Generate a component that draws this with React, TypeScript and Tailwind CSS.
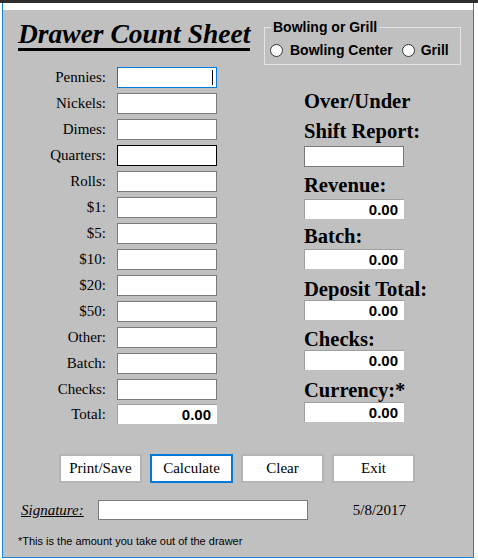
import React from "react";

const serif = "font-['Liberation_Serif',serif]";
const sans = "font-['Liberation_Sans',Arial,sans-serif]";

const rows = [
  "Pennies:",
  "Nickels:",
  "Dimes:",
  "Quarters:",
  "Rolls:",
  "$1:",
  "$5:",
  "$10:",
  "$20:",
  "$50:",
  "Other:",
  "Batch:",
  "Checks:",
];

function ValueBox({ className = "" }: { className?: string }) {
  return (
    <div
      className={`h-[20px] w-[100px] bg-white border-t border-l border-[#a0a0a0] flex items-center justify-end pr-[6px] ${sans} text-[15px] font-bold text-black leading-none ${className}`}
    >
      0.00
    </div>
  );
}

function Heading({ children, className = "" }: { children: React.ReactNode; className?: string }) {
  return (
    <div className={`${serif} font-bold text-[20.6px] leading-[20px] text-black whitespace-nowrap ${className}`}>
      {children}
    </div>
  );
}

function Radio({ className = "" }: { className?: string }) {
  return <span className={`block w-[13px] h-[13px] rounded-full bg-white border border-[#333] shrink-0 ${className}`} />;
}

export default function App() {
  return (
    <div className="w-[478px] h-[560px] bg-white overflow-hidden">
      <div className="h-[3px] bg-[#2d2d2d]" />
      <div className="ml-[2px] w-[472px] border-l border-r border-b border-[#1883d7]">
        <div className="h-[7px] bg-white" />
        <div className="h-[547px] bg-[#c0c0c0] flex flex-col">
          {/* header */}
          <div className="h-[57px] flex items-start">
            <div className="w-[261px] shrink-0">
              <span
                className={`ml-[15px] mt-[10px] inline-block ${serif} italic font-bold text-[27.5px] leading-[28px] text-black border-b-[3px] border-black whitespace-nowrap`}
              >
                Drawer Count Sheet
              </span>
            </div>
            <div className="mt-[17px] relative w-[197px] h-[38px] border border-[#e4e4e4] pt-[14px] pl-[5px]">
              <span
                className={`absolute -top-[9px] left-[6px] px-[2px] bg-[#c0c0c0] ${sans} font-bold text-[14px] leading-[16px] text-black whitespace-nowrap`}
              >
                Bowling or Grill
              </span>
              <div className={`flex items-center ${sans} font-bold text-[14px] leading-[16px] text-black whitespace-nowrap`}>
                <Radio />
                <span className="ml-[7px]">Bowling Center</span>
                <Radio className="ml-[9px]" />
                <span className="ml-[6px]">Grill</span>
              </div>
            </div>
          </div>

          {/* main */}
          <div className="flex">
            <div className="ml-[23px] flex flex-col gap-[5px]">
              {rows.map((r, i) => (
                <div key={r} className="flex items-center h-[21px]">
                  <div className={`w-[80px] text-right ${serif} text-[15px] leading-[17px] text-black`}>{r}</div>
                  <div
                    className={`ml-[11px] w-[100px] h-[21px] bg-white border flex items-center justify-end pr-[3px] ${
                      i === 0 ? "border-[#0078d7]" : i === 3 ? "border-black" : "border-[#7a7a7a]"
                    }`}
                  >
                    {i === 0 && <span className="w-px h-[15px] bg-black" />}
                  </div>
                </div>
              ))}
              <div className="flex items-center h-[20px] -mt-[1px]">
                <div className={`w-[80px] text-right ${serif} text-[15px] leading-[17px] text-black`}>Total:</div>
                <ValueBox className="ml-[11px]" />
              </div>
            </div>

            <div className="ml-[87px] flex flex-col">
              <Heading className="mt-[24px]">Over/Under</Heading>
              <Heading className="mt-[10px]">Shift Report:</Heading>
              <div className="mt-[5px] w-[100px] h-[21px] bg-white border border-[#7a7a7a]" />
              <Heading className="mt-[8px]">Revenue:</Heading>
              <ValueBox className="mt-[4px]" />
              <Heading className="mt-[7px]">Batch:</Heading>
              <ValueBox className="mt-[3px]" />
              <Heading className="mt-[10px]">Deposit Total:</Heading>
              <ValueBox className="mt-[1px]" />
              <Heading className="mt-[9px]">Checks:</Heading>
              <ValueBox className="mt-[1px]" />
              <Heading className="mt-[10px]">Currency:*</Heading>
              <ValueBox className="mt-[2px]" />
            </div>
          </div>

          {/* buttons */}
          <div className="mt-[30px] ml-[56px] flex gap-[8px]">
            {["Print/Save", "Calculate", "Clear", "Exit"].map((b) => (
              <button
                key={b}
                className={`w-[83px] h-[29px] bg-white border-2 ${
                  b === "Calculate" ? "border-[#0078d7]" : "border-[#b4b4b4]"
                } ${serif} text-[15px] leading-none text-black flex items-center justify-center`}
              >
                {b}
              </button>
            ))}
          </div>

          {/* signature */}
          <div className="mt-[17px] flex items-center h-[20px]">
            <span className={`ml-[18px] ${serif} italic underline text-[15px] leading-[17px] text-black`}>Signature:</span>
            <div className="ml-[14px] w-[210px] h-[20px] bg-white border border-[#7a7a7a]" />
            <span className={`ml-[45px] ${serif} text-[15px] leading-[17px] text-black`}>5/8/2017</span>
          </div>

          <div className={`mt-[15px] ml-[15px] ${sans} text-[11px] leading-[13px] text-black whitespace-nowrap`}>
            *This is the amount you take out of the drawer
          </div>
        </div>
      </div>
    </div>
  );
}
